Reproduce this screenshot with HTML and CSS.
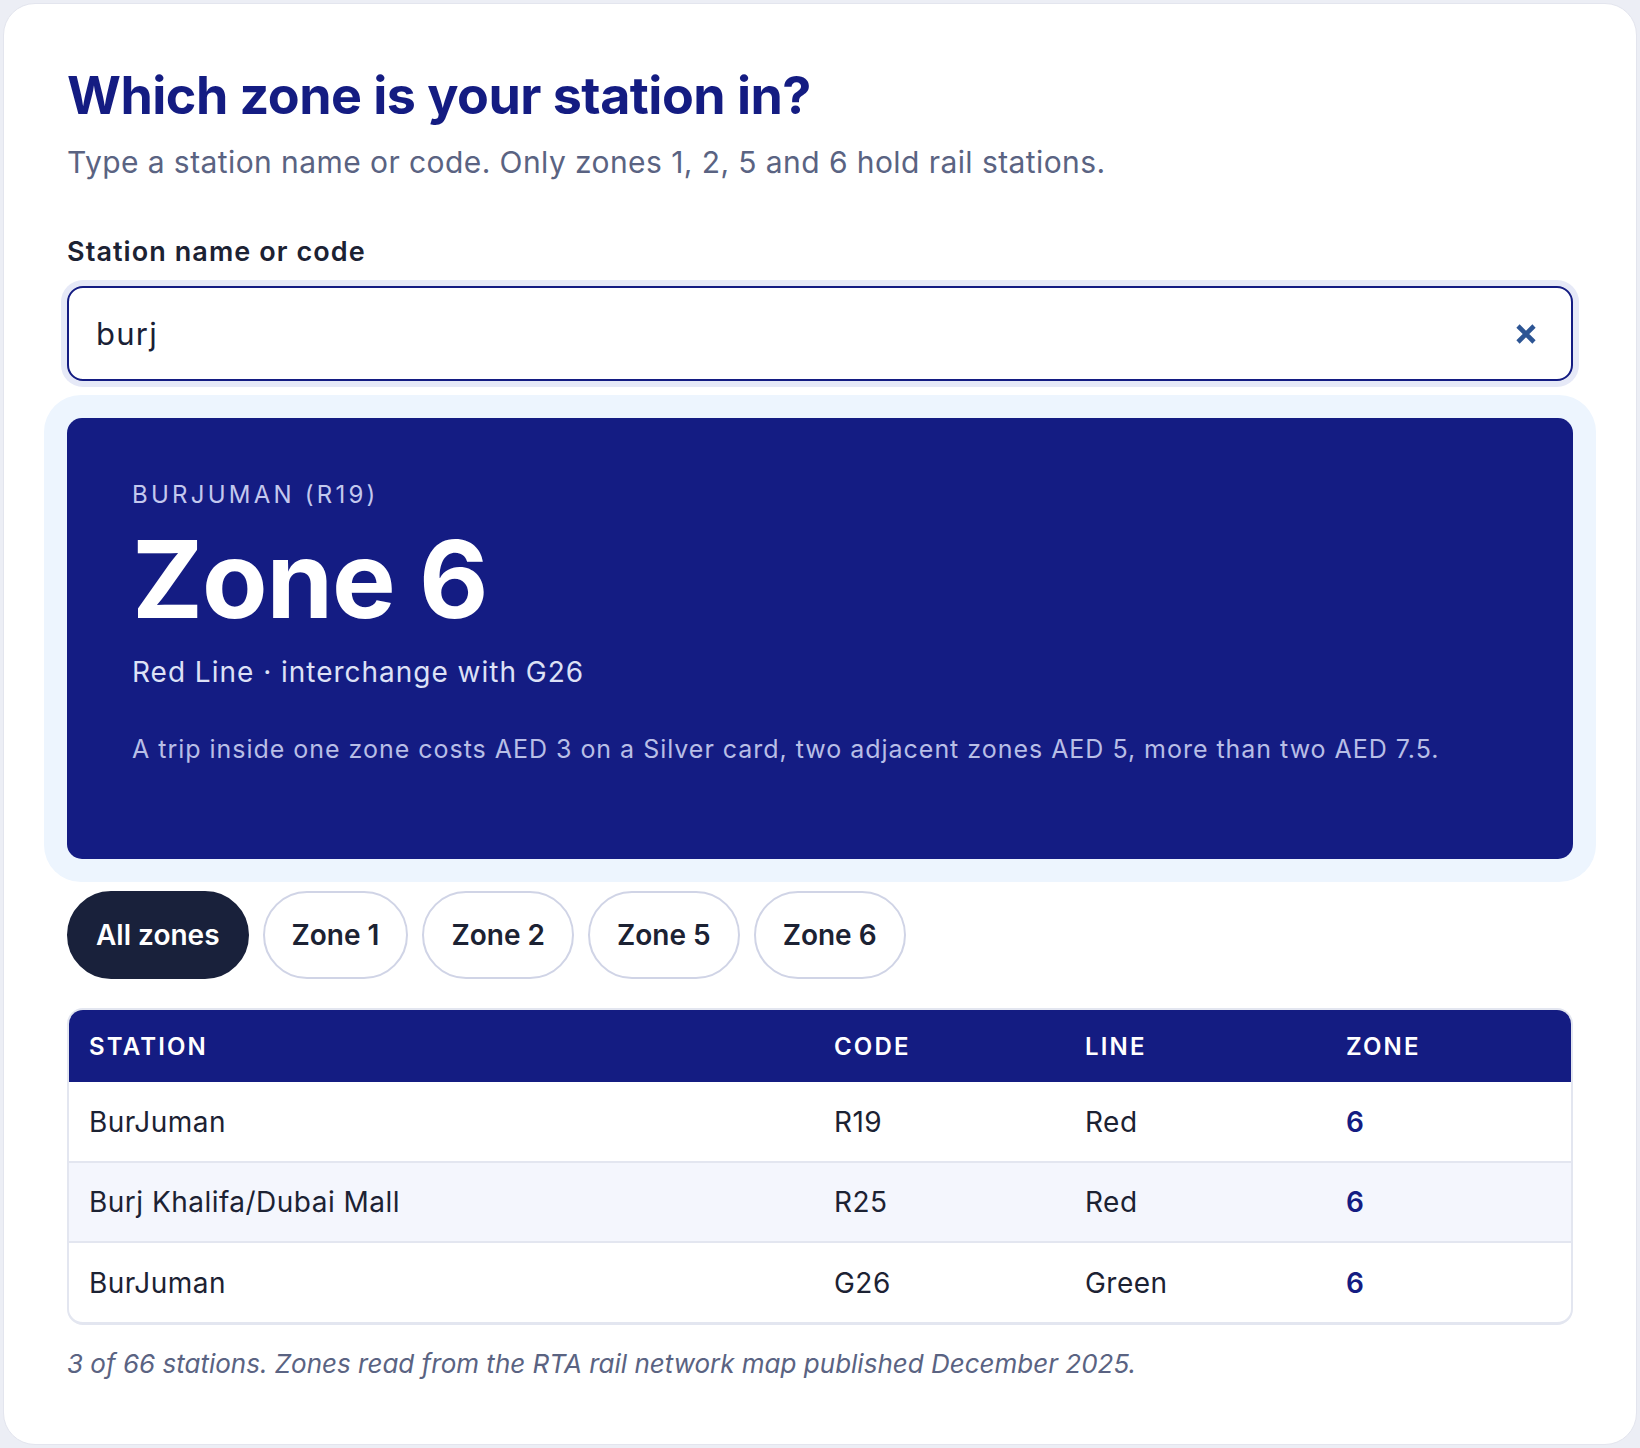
FILE: index.html
```html
<!DOCTYPE html>
<html lang="en">
<head>
<meta charset="utf-8">
<title>Which zone is your station in?</title>
<link rel="stylesheet" href="styles.css">
</head>
<body>
<main class="card">
  <h1 class="title">Which zone is your station in?</h1>
  <p class="subtitle">Type a station name or code. Only zones 1, 2, 5 and 6 hold rail stations.</p>

  <label class="label" for="q">Station name or code</label>
  <div class="search">
    <input id="q" class="search-input" type="text" value="burj">
    <button class="clear" type="button" aria-label="Clear">
      <svg viewBox="0 0 24 24" width="24" height="24" aria-hidden="true">
        <path d="M4 4 L20 20 M20 4 L4 20" fill="none" stroke="#2d5594" stroke-width="4.6" stroke-linecap="butt"/>
      </svg>
    </button>
  </div>

  <section class="result">
    <div class="result-eyebrow">BURJUMAN (R19)</div>
    <div class="result-zone">Zone 6</div>
    <div class="result-line">Red Line · interchange with G26</div>
    <p class="result-fare">A trip inside one zone costs AED 3 on a Silver card, two adjacent zones AED 5, more than two AED 7.5.</p>
  </section>

  <div class="chips">
    <button class="chip chip-active" type="button">All zones</button>
    <button class="chip" type="button">Zone 1</button>
    <button class="chip" type="button">Zone 2</button>
    <button class="chip" type="button">Zone 5</button>
    <button class="chip" type="button">Zone 6</button>
  </div>

  <div class="table-wrap">
    <table class="stations">
      <thead>
        <tr>
          <th class="col-station">Station</th>
          <th class="col-code">Code</th>
          <th class="col-line">Line</th>
          <th class="col-zone">Zone</th>
        </tr>
      </thead>
      <tbody>
        <tr>
          <td>BurJuman</td>
          <td>R19</td>
          <td>Red</td>
          <td class="zone">6</td>
        </tr>
        <tr class="alt">
          <td>Burj Khalifa/Dubai Mall</td>
          <td>R25</td>
          <td>Red</td>
          <td class="zone">6</td>
        </tr>
        <tr>
          <td>BurJuman</td>
          <td>G26</td>
          <td>Green</td>
          <td class="zone">6</td>
        </tr>
      </tbody>
    </table>
  </div>

  <p class="note">3 of 66 stations. Zones read from the RTA rail network map published December 2025.</p>
</main>
</body>
</html>
```

FILE: styles.css
```css
* { box-sizing: border-box; }

html, body { margin: 0; }

body {
  background: #eceef5;
  padding: 3px;
  font-family: Inter, "Noto Sans", "Liberation Sans", sans-serif;
  color: #1c2233;
}

.card {
  background: #ffffff;
  border: 1px solid #e3e5ee;
  border-radius: 32px;
  min-height: 1442px;
  padding: 61px 63px 60px 63px;
}

.title {
  margin: 0;
  font-size: 52px;
  line-height: 62px;
  font-weight: 700;
  letter-spacing: -0.01em;
  color: #141c82;
}

.subtitle {
  margin: 14px 0 0;
  font-size: 30px;
  line-height: 42px;
  letter-spacing: 0.014em;
  color: #5a6382;
}

.label {
  display: block;
  margin-top: 51px;
  font-size: 27px;
  line-height: 36px;
  font-weight: 600;
  letter-spacing: 0.04em;
  color: #1c2233;
}

.search {
  position: relative;
  margin-top: 16px;
  height: 95px;
  border: 2.5px solid #141c82;
  border-radius: 16px;
  box-shadow: 0 0 0 6px #e6e9f7;
  display: flex;
  align-items: center;
  background: #fff;
}

.search-input {
  flex: 1;
  border: 0;
  outline: 0;
  background: transparent;
  height: 100%;
  padding: 0 0 0 27px;
  font-family: inherit;
  font-size: 31px;
  letter-spacing: 0.04em;
  color: #1a1f36;
}

.clear {
  border: 0;
  background: transparent;
  width: 40px;
  height: 40px;
  margin-right: 25px;
  padding: 0;
  display: flex;
  align-items: center;
  justify-content: center;
  cursor: pointer;
}

.result {
  margin-top: 37px;
  background: #141c83;
  border-radius: 15px;
  box-shadow: 0 0 0 23px #edf5fe;
  padding: 61px 66px 92px 65px;
  color: #ffffff;
}

.result-eyebrow {
  font-size: 24px;
  line-height: 32px;
  letter-spacing: 0.135em;
  color: #c3c8ee;
}

.result-zone {
  margin-top: 11px;
  font-size: 107px;
  line-height: 114px;
  font-weight: 700;
  letter-spacing: -0.01em;
  color: #ffffff;
}

.result-line {
  margin-top: 16px;
  font-size: 28px;
  line-height: 40px;
  letter-spacing: 0.035em;
  color: #dde1f6;
}

.result-fare {
  margin: 39px 0 0;
  font-size: 25px;
  line-height: 36px;
  letter-spacing: 0.039em;
  color: #b8bee6;
}

.chips {
  margin-top: 32px;
  display: flex;
  gap: 14px;
}

.chip {
  height: 88px;
  padding: 0 27px;
  border: 2px solid #d0d4e6;
  border-radius: 999px;
  background: #ffffff;
  font-family: inherit;
  font-size: 28px;
  font-weight: 600;
  color: #1c2233;
}

.chip-active {
  background: #19213b;
  border-color: #19213b;
  color: #ffffff;
}

.table-wrap {
  margin-top: 29px;
  border: 2px solid #e3e6f0;
  border-bottom-width: 3px;
  border-radius: 16px;
  overflow: hidden;
}

.stations {
  width: 100%;
  border-collapse: collapse;
  table-layout: fixed;
}

.stations th {
  background: #141c82;
  color: #ffffff;
  text-align: left;
  text-transform: uppercase;
  font-size: 24px;
  font-weight: 600;
  letter-spacing: 0.09em;
  height: 72px;
  padding: 0 20px;
}

.col-station { width: 745px; }
.col-code { width: 251px; }
.col-line { width: 261px; }
.col-zone { width: auto; }

.stations td {
  height: 80px;
  padding: 0 20px;
  font-size: 28px;
  letter-spacing: 0.017em;
  color: #1c2233;
  border-top: 2px solid #e3e6f0;
}

.stations tbody tr:first-child td { border-top: 0; }

.stations tr.alt td { background: #f4f6fd; }

.stations td.zone {
  color: #141c82;
  font-weight: 600;
}

.note {
  margin: 21px 0 0;
  font-size: 26px;
  line-height: 36px;
  font-style: italic;
  color: #5a6382;
}
```
